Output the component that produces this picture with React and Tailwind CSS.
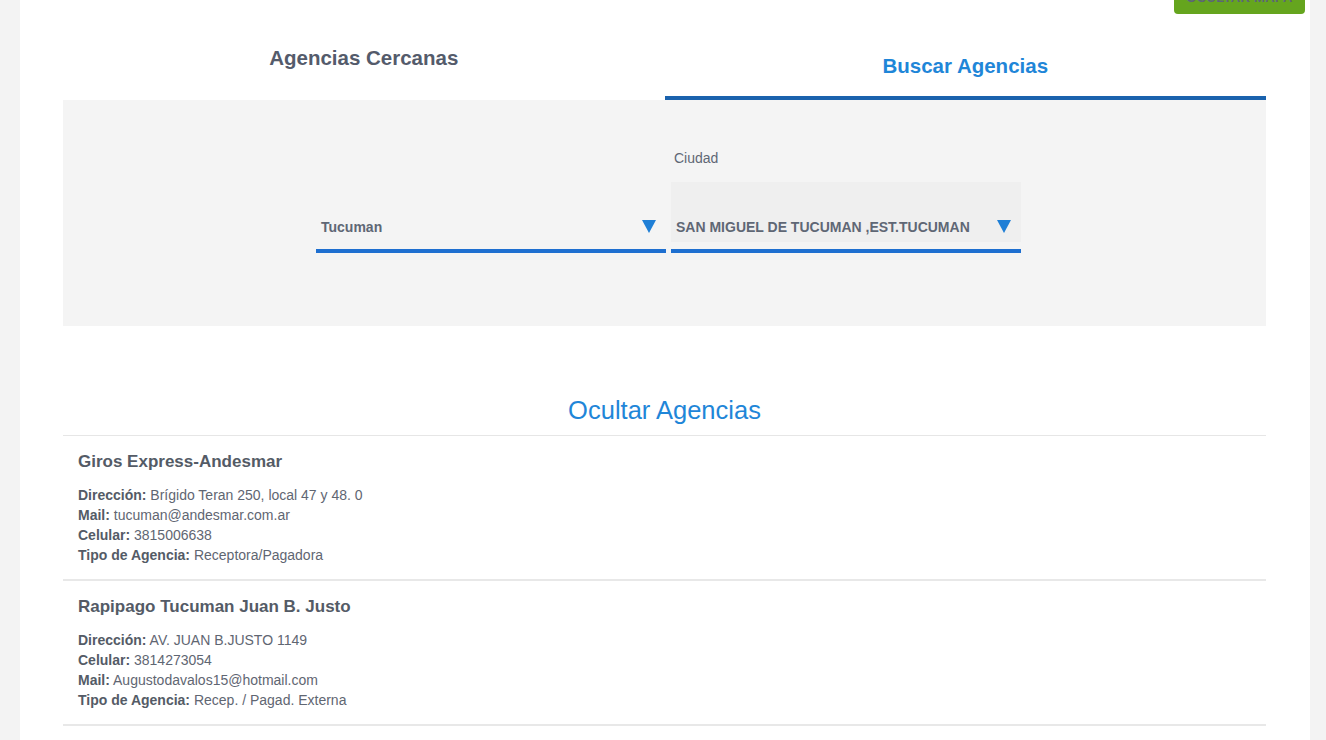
import React from "react";

const agencies = [
  {
    name: "Giros Express-Andesmar",
    rows: [
      ["Dirección:", "Brígido Teran 250, local 47 y 48. 0"],
      ["Mail:", "tucuman@andesmar.com.ar"],
      ["Celular:", "3815006638"],
      ["Tipo de Agencia:", "Receptora/Pagadora"],
    ],
  },
  {
    name: "Rapipago Tucuman Juan B. Justo",
    rows: [
      ["Dirección:", "AV. JUAN B.JUSTO 1149"],
      ["Celular:", "3814273054"],
      ["Mail:", "Augustodavalos15@hotmail.com"],
      ["Tipo de Agencia:", "Recep. / Pagad. Externa"],
    ],
  },
];

function Arrow() {
  return (
    <svg width="14" height="13" viewBox="0 0 14 13" className="block shrink-0">
      <path d="M0 0 H14 L7 13 Z" fill="#1f7fd6" />
    </svg>
  );
}

export default function App() {
  return (
    <div
      className="min-h-[740px] bg-[#f3f3f3] pl-[20px] pr-[16px] overflow-hidden"
      style={{ fontFamily: '"Liberation Sans", Arial, sans-serif' }}
    >
      <div className="relative bg-white min-h-[740px] pl-[43px] pr-[44px]">
        <button className="absolute right-[5px] top-[-18px] h-[32px] w-[131px] rounded-[4px] bg-[#65a51e] text-[13px] font-bold tracking-wide text-[#5b6577] leading-[14px]">
          OCULTAR MAPA
        </button>

        {/* tabs */}
        <div className="flex h-[100px]">
          <div className="flex-1 flex justify-center pt-[46px]">
            <span className="text-[20.5px] font-bold text-[#545b6b] leading-[24px]">
              Agencias Cercanas
            </span>
          </div>
          <div className="flex-1 flex flex-col items-center border-b-4 border-[#1a62ad]">
            <span className="mt-[54px] text-[20.5px] font-bold text-[#1f86d8] leading-[24px]">
              Buscar Agencias
            </span>
          </div>
        </div>

        {/* search panel */}
        <div className="h-[226px] bg-[#f4f4f4] flex justify-center pt-[22px] pl-[8px]">
          <div className="flex gap-[5px]">
            <div className="w-[350px] flex flex-col">
              <div className="h-[60px] mt-[60px] flex items-end pb-[4px] pl-[5px] pr-[10px]">
                <span className="flex-1 text-[14px] font-bold text-[#5f6775]">Tucuman</span>
                <span className="flex mb-[5px]"><Arrow /></span>
              </div>
              <div className="h-[4px] mt-[7px] bg-[#1e6fd0]" />
            </div>
            <div className="w-[350px] flex flex-col">
              <div className="h-[60px] pl-[3px] pt-[28px] text-[14px] text-[#5f6775] leading-[16px]">
                Ciudad
              </div>
              <div className="h-[60px] bg-[#efefef] flex items-end pb-[4px] pl-[5px] pr-[10px]">
                <span className="flex-1 text-[14px] font-bold text-[#5f6775]">
                  SAN MIGUEL DE TUCUMAN ,EST.TUCUMAN
                </span>
                <span className="flex mb-[5px]"><Arrow /></span>
              </div>
              <div className="h-[4px] mt-[7px] bg-[#1e6fd0]" />
            </div>
          </div>
        </div>

        {/* results */}
        <div className="pt-[69px] text-center border-b border-[#e6e6e6] pb-[9px]">
          <span className="text-[25.5px] text-[#1f86d8] leading-[30px]">Ocultar Agencias</span>
        </div>
        {agencies.map((a) => (
          <div key={a.name} className="border-b-2 border-[#e8e8e8] px-[15px] pt-[16px] pb-[14px]">
            <div className="text-[17px] font-bold text-[#545b66] leading-[20px]">{a.name}</div>
            <div className="mt-[13px] text-[14px] leading-[20px] text-[#5f6672]">
              {a.rows.map(([k, v]) => (
                <div key={k}>
                  <span className="font-bold text-[#545b66]">{k}</span> {v}
                </div>
              ))}
            </div>
          </div>
        ))}
      </div>
    </div>
  );
}
